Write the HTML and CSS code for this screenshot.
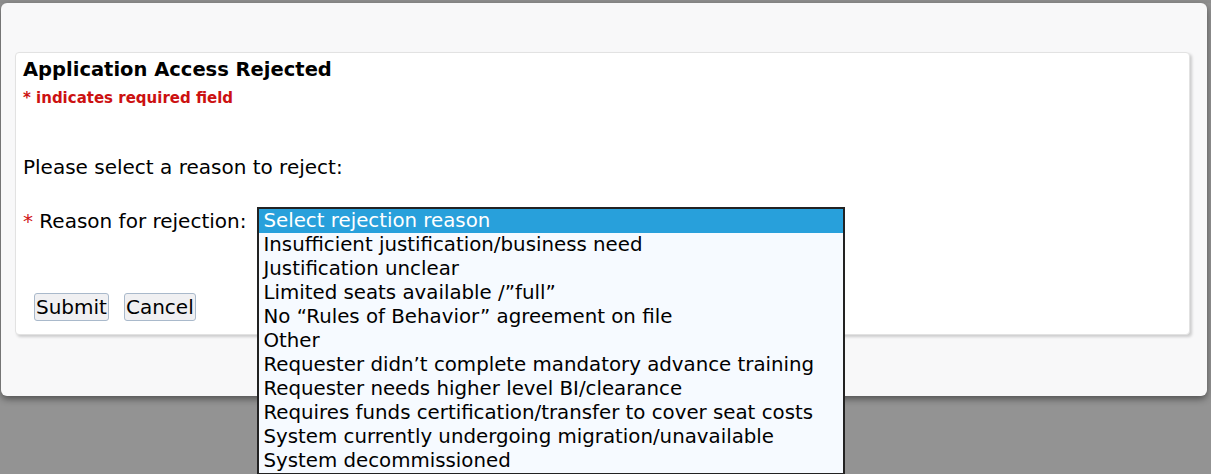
FILE: index.html
```html
<!DOCTYPE html>
<html lang="en">
<head>
<meta charset="utf-8">
<title>Application Access Rejected</title>
<link rel="stylesheet" href="styles.css">
</head>
<body>
<div class="page-behind"></div>
<div class="modal">
  <div class="card">
    <h2 class="title">Application Access Rejected</h2>
    <div class="req-note">* indicates required field</div>
    <p class="prompt">Please select a reason to reject:</p>
    <div class="field">
      <label class="field-label"><span class="star">*</span> Reason for rejection:</label>
      <div class="select-wrap">
        <ul class="listbox">
          <li class="opt selected">Select rejection reason</li>
          <li class="opt">Insufficient justification/business need</li>
          <li class="opt">Justification unclear</li>
          <li class="opt">Limited seats available /”full”</li>
          <li class="opt">No “Rules of Behavior” agreement on file</li>
          <li class="opt">Other</li>
          <li class="opt">Requester didn’t complete mandatory advance training</li>
          <li class="opt">Requester needs higher level BI/clearance</li>
          <li class="opt">Requires funds certification/transfer to cover seat costs</li>
          <li class="opt">System currently undergoing migration/unavailable</li>
          <li class="opt">System decommissioned</li>
        </ul>
      </div>
    </div>
    <div class="actions">
      <button class="btn" type="button">Submit</button>
      <button class="btn" type="button">Cancel</button>
    </div>
  </div>
</div>
</body>
</html>
```
FILE: styles.css
```css
html, body {
  margin: 0;
  padding: 0;
  height: 100%;
  overflow: hidden;
}
body {
  background: #939393;
  font-family: "DejaVu Sans", Verdana, sans-serif;
  color: #000;
  position: relative;
}
.page-behind {
  height: 3px;
  background: #8e8e8e;
}
.modal {
  position: absolute;
  left: 1px;
  top: 3px;
  width: 1206px;
  height: 393px;
  box-sizing: border-box;
  background: #f8f8f9;
  border-radius: 6px;
  box-shadow: 0 3px 7px rgba(0, 0, 0, 0.45);
  padding: 49px 0 0 14px;
}
.card {
  width: 1175px;
  height: 283px;
  box-sizing: border-box;
  background: #fff;
  border: 1px solid #e2e2e2;
  border-radius: 4px;
  box-shadow: 2px 2px 3px rgba(0, 0, 0, 0.18);
  padding: 5px 7px 0 7px;
}
.title {
  margin: 0;
  font-size: 19.5px;
  line-height: 24px;
  font-weight: bold;
}
.req-note {
  margin-top: 7px;
  font-size: 15px;
  line-height: 18px;
  font-weight: bold;
  color: #cc1111;
}
.prompt {
  margin: 48px 0 0 0;
  font-size: 20px;
  line-height: 24px;
}
.field {
  margin-top: 30px;
  display: flex;
  align-items: center;
  gap: 11px;
  height: 24px;
}
.field-label {
  font-size: 20px;
  line-height: 24px;
  white-space: nowrap;
}
.star {
  color: #d01515;
}
.select-wrap {
  position: relative;
  width: 588px;
  height: 24px;
}
.listbox {
  position: absolute;
  left: 0;
  top: -2px;
  width: 588px;
  box-sizing: border-box;
  margin: 0;
  padding: 0;
  list-style: none;
  background: #f6faff;
  border: 2px solid #222;
  z-index: 5;
}
.opt {
  font-size: 19.8px;
  line-height: 24px;
  height: 24px;
  padding-left: 4px;
  white-space: nowrap;
}
.opt.selected {
  background: #28a0db;
  color: #fff;
}
.actions {
  margin-top: 60px;
  display: flex;
  gap: 15px;
  padding-left: 11px;
}
.btn {
  font-family: "DejaVu Sans", Verdana, sans-serif;
  font-size: 20px;
  line-height: 24px;
  height: 28px;
  padding: 0 1px;
  background: #f0f0f2;
  border: 1px solid #a9b9cb;
  border-radius: 3px;
  color: #000;
}
```
